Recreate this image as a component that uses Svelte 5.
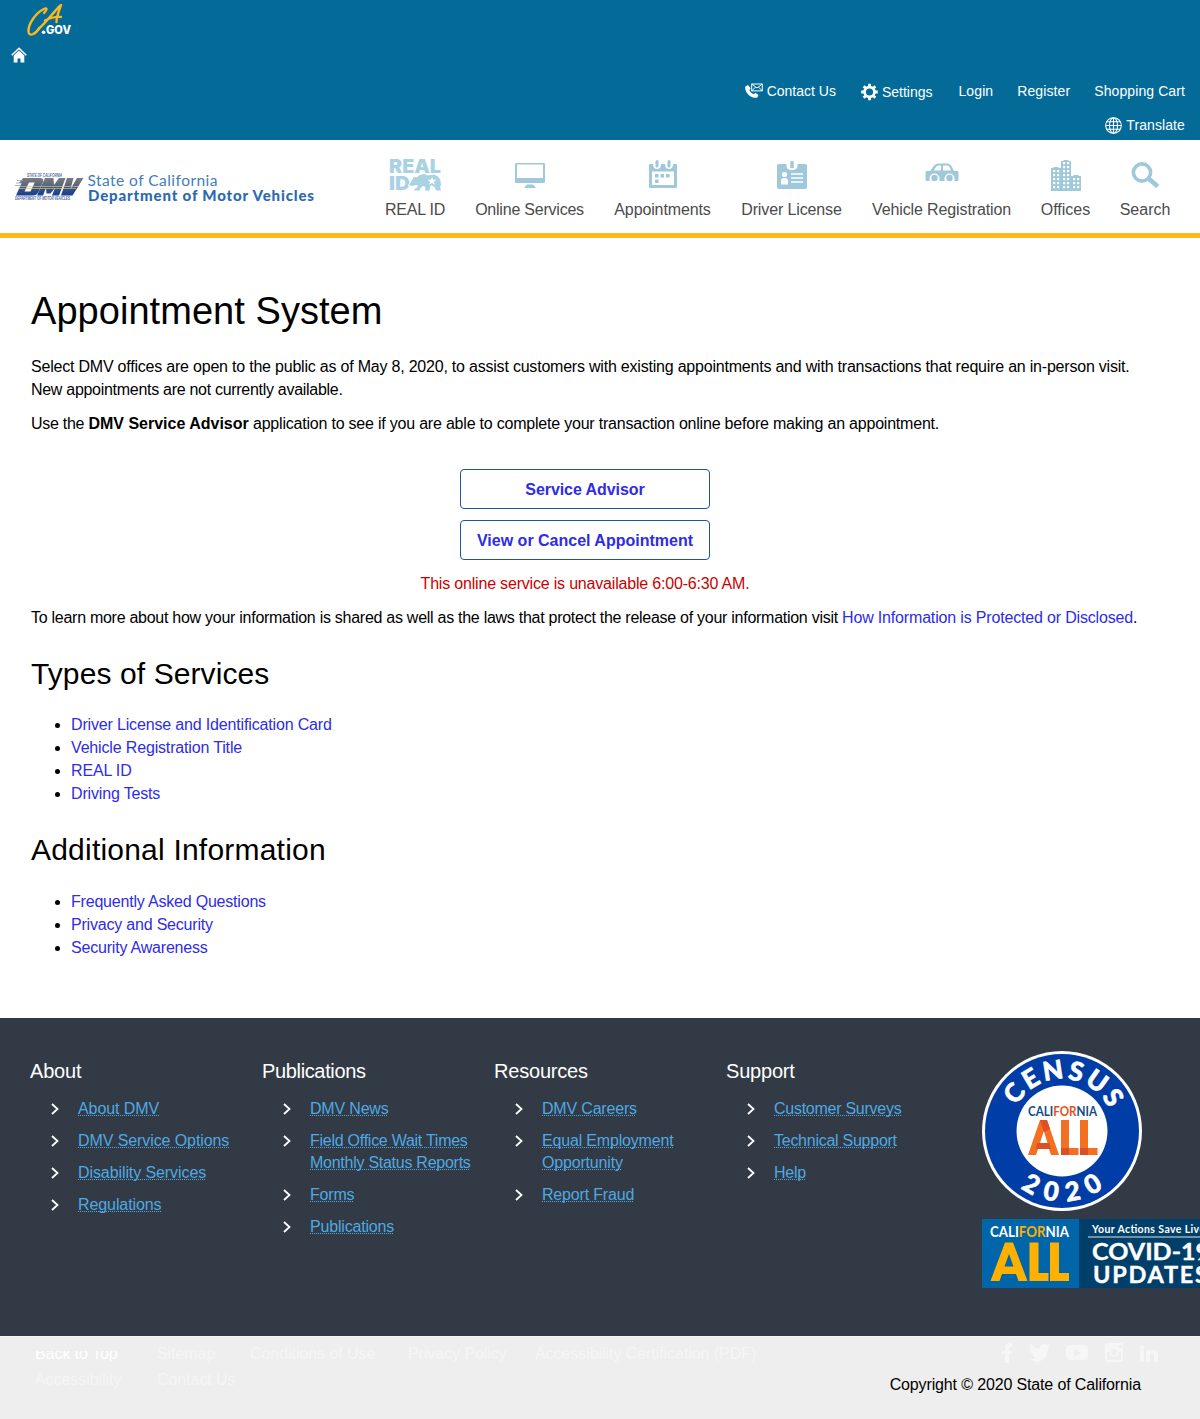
<script>
  const utility = [
    { label: 'Contact Us', icon: 'contact' },
    { label: 'Settings', icon: 'gear' },
    { label: 'Login' },
    { label: 'Register' },
    { label: 'Shopping Cart' }
  ];
  const nav = ['REAL ID', 'Online Services', 'Appointments', 'Driver License', 'Vehicle Registration', 'Offices', 'Search'];
  const services = ['Driver License and Identification Card', 'Vehicle Registration Title', 'REAL ID', 'Driving Tests'];
  const additional = ['Frequently Asked Questions', 'Privacy and Security', 'Security Awareness'];
  const columns = [
    { title: 'About', links: ['About DMV', 'DMV Service Options', 'Disability Services', 'Regulations'] },
    { title: 'Publications', links: ['DMV News', 'Field Office Wait Times Monthly Status Reports', 'Forms', 'Publications'] },
    { title: 'Resources', links: ['DMV Careers', 'Equal Employment Opportunity', 'Report Fraud'] },
    { title: 'Support', links: ['Customer Surveys', 'Technical Support', 'Help'] }
  ];
  const windows = [
    [2, 12], [6, 12], [2, 16], [6, 16], [2, 20], [6, 20], [2, 24], [6, 24],
    [12, 4], [16, 4], [12, 8], [16, 8], [12, 12], [16, 12], [12, 16], [16, 16], [12, 20], [16, 20], [12, 24], [16, 24],
    [22, 20], [26, 20], [22, 24], [26, 24], [2, 28], [6, 28], [12, 28], [16, 28], [22, 28], [26, 28]
  ];
</script>

<header class="top">
  <svg class="cagov" width="46" height="34" viewBox="0 0 46 34">
    <g fill="none" stroke="#fdb81e" stroke-linecap="round" stroke-linejoin="round">
      <path stroke-width="2.400" d="M17 9c4-4 3-6-1-3.500C9 9 1 20 1.500 27.500c.5 6 7 2.500 11-3.500" />
      <path stroke-width="2.400" d="M12 24.500C19 19 28 6 34 1c-2 6-4.500 11-4.500 17M18 16.500c6-3 11-4 16-3.500" />
    </g>
    <circle cx="16.600" cy="28.300" r="1.800" fill="#fff" />
    <text x="19" y="30" textLength="25" lengthAdjust="spacingAndGlyphs" class="gov">GOV</text>
  </svg>
  <svg class="home" width="16" height="16" viewBox="0 0 16 16">
    <path d="M.7 8.200 8 1.300l7.300 6.900" fill="none" stroke="#fff" stroke-width="1.500" />
    <path d="M2.700 8.500 8 3.600l5.300 4.900V15.500H9.500v-4h-3v4H2.700z" fill="#fff" />
  </svg>
  <ul class="utility">
    {#each utility as item, i}
      <li class="u{i}">
        {#if item.icon === 'contact'}
          <svg width="18" height="16" viewBox="0 0 18 16">
            <path d="M.3 3.500 3 2l2.700 3.300L4.400 7.200c1 2 2.500 3.300 4.400 4l1.500-1.500 3.200 2.200-1.200 2.500C6 16.500-.8 9.500.3 3.500z" fill="#fff" />
            <path d="M6.700 1h10.600v6.900H6.700zM6.700 1l5.300 4 5.300-4M6.700 7.900l3.700-3.700M17.300 7.900l-3.700-3.700" fill="none" stroke="#fff" stroke-width="1" />
          </svg>
        {:else if item.icon === 'gear'}
          <svg width="17" height="18" viewBox="0 0 18 18">
            <circle cx="9" cy="9" r="5.200" fill="none" stroke="#fff" stroke-width="2.800" />
            <g stroke="#fff" stroke-width="3">
              <path d="M9 .2v3M9 14.800v3M.2 9h3M14.800 9h3M2.800 2.800l2 2M13.200 13.200l2 2M2.800 15.200l2-2M13.200 4.800l2-2" />
            </g>
          </svg>
        {/if}
        <span>{item.label}</span>
      </li>
    {/each}
  </ul>
  <div class="translate">
    <svg width="17" height="17" viewBox="0 0 17 17" fill="none" stroke="#fff" stroke-width="1.100">
      <circle cx="8.500" cy="8.500" r="7.800" />
      <ellipse cx="8.500" cy="8.500" rx="4" ry="7.800" />
      <path d="M8.500.7v15.600M.7 8.500h15.600M2 4.700h13M2 12.300h13" />
    </svg>
    <span>Translate</span>
  </div>
</header>

<div class="masthead">
  <svg class="brand" width="302" height="34" viewBox="0 0 302 34">
    <defs>
      <linearGradient id="dmv" gradientUnits="userSpaceOnUse" x1="0" y1="6" x2="0" y2="24">
        <stop offset="0" stop-color="#7b7b7d" />
        <stop offset=".4" stop-color="#5b6780" />
        <stop offset=".6" stop-color="#2f5092" />
        <stop offset="1" stop-color="#183d91" />
      </linearGradient>
    </defs>
    <text class="tiny" x="12" y="5" textLength="35" lengthAdjust="spacingAndGlyphs">STATE OF CALIFORNIA</text>
    <g fill="url(#dmv)" fill-rule="evenodd">
      <path d="M8 6h17q4 0 3 4l-4 9q-2 4.500-6 4.500H1L6.500 11H4zM14 10.500 9.500 19.500h6l4.200-9z" />
      <path d="M30 6h8.500l.5 7 5-7h6.500l-6.500 17.500h-7l3-7.500-4.500 5.500h-4L31 16l-3 7.500h-6z" />
      <path d="M52 6h6.500l-3 11L62 6h6.500L57.500 23.500H46z" />
    </g>
    <path d="M5 14.500h58M4 16.500h57" stroke="#e0c558" stroke-width=".7" />
    <path d="M2 8.500h6M1 11h6M0 13.500h5" stroke="#8f9fbc" stroke-width=".8" />
    <text class="tiny" x="0" y="28" textLength="55" lengthAdjust="spacingAndGlyphs">DEPARTMENT OF MOTOR VEHICLES</text>
    <text class="state" x="72.500" y="14" textLength="130">State of California</text>
    <text class="dept" x="73" y="28.500" textLength="226">Department of Motor Vehicles</text>
  </svg>
  <nav>
    {#each nav as label, i}
      <a href="#{i}" class="n{i}">
        <span class="icon">
          {#if i === 0}
            <svg width="54" height="34" viewBox="0 0 54 34" fill="#a9d2e3">
              <text class="real" x="1" y="15" textLength="52" lengthAdjust="spacingAndGlyphs">REAL</text>
              <text class="real" x="1" y="31.500" textLength="21" lengthAdjust="spacingAndGlyphs">ID</text>
              <path class="bear" d="M21 27l2.500-4 2-3.500 1.500-.5 1.500.5L32 17l4-1 4 1.500 6-1 4 2 2.500 4 .5 5-1 1.500 1 3.500h-5l-1-3-3.500-2.500-1.500 2-.5 3.500h-4.500l.5-3.500-2.500-1-2.500 2-1 2.500h-5.500l1-2 2.500-1v-2.500l-3 .2-2 .8z" />
              <path d="m44 19 1.200 2.800h3.200l-2.500 2 1 3-2.900-1.800-2.900 1.800 1-3-2.500-2h3.200z" fill="#fff" />
            </svg>
          {:else if i === 1}
            <svg width="30" height="34" viewBox="0 0 30 34" fill="#9fc8db">
              <path fill-rule="evenodd" d="M1 5h28q1 0 1 1v18q0 1-1 1H1q-1 0-1-1V6q0-1 1-1zM2 6.500v13.500h26v-13.500z" />
              <path d="M12 26.500h6l3 3.500H9z" />
            </svg>
          {:else if i === 2}
            <svg width="28" height="34" viewBox="0 0 28 34" fill="#9fc8db">
              <path fill-rule="evenodd" d="M1 6h3q0 5 4 5t4-5h4q0 5 4 5t4-5h3q1 0 1 1v22q0 1-1 1H1q-1 0-1-1V7q0-1 1-1zM3 13.500V27h22V13.500z" />
              <rect x="6.500" y="2" width="3" height="7.500" rx="1.500" /><rect x="18.500" y="2" width="3" height="7.500" rx="1.500" />
              <path d="M11.500 16H15v3.500h-3.500zM17 16h3.500v3.500H17zM6 21.500h3.500V25H6zM6 16h3.500v3.500H6z" />
            </svg>
          {:else if i === 3}
            <svg width="30" height="34" viewBox="0 0 30 34">
              <rect y="6" width="30" height="25" rx="2" fill="#9fc8db" />
              <path d="M9.500 5v3q0 4 5.500 4t5.500-4V5z" fill="#fff" />
              <path d="M13.300 3h3.400v7h-3.400z" fill="#9fc8db" />
              <circle cx="7.500" cy="16.500" r="2.600" fill="#fff" />
              <path d="M4 26.500v-4q0-2.500 3.500-2.500t3.500 2.500v4z M14 15.200h12v1.600H14zM14 19.200h12v1.600H14zM14 23.200h12v1.600H14z" fill="#fff" />
            </svg>
          {:else if i === 4}
            <svg width="34" height="34" viewBox="0 0 34 34" fill="#9fc8db">
              <path d="M1.500 13H5l3-4q2-3.500 6-3.500h8q3 0 5 3.500l2 4h3q1.500 0 1.500 1.500v7q0 1.500-1.500 1.500h-30Q.5 23 .5 21.500v-7Q.5 13 1.500 13z" />
              <path d="M9 12.500h7V7.500h-2q-3 0-5 5zM18 7.500v5h8q-1.500-5-4-5z" fill="#fff" />
              <path d="M4.500 23.500v-3a5 5 0 0 1 10 0v3zM19.500 23.500v-3a5 5 0 0 1 10 0v3z" fill="#fff" />
              <circle cx="9.500" cy="20" r="3.200" /><circle cx="24.500" cy="20" r="3.200" />
            </svg>
          {:else if i === 5}
            <svg width="30" height="34" viewBox="0 0 30 34">
              <path fill="#9fc8db" d="M0 10h2l1-1h4l1 1h2V3h2l1-1h4l1 1h2v15h2l1-1h4l1 1h2v15H0z" />
              {#each windows as [x, y]}
                <rect {x} {y} width="2.200" height="2.200" fill="#fff" />
              {/each}
            </svg>
          {:else}
            <svg width="30" height="34" viewBox="0 0 30 34" fill="none" stroke="#9fc8db">
              <circle cx="12" cy="14.500" r="8.600" stroke-width="3.600" />
              <path d="m18.500 20.500 9.300 8" stroke-width="4.600" />
            </svg>
          {/if}
        </span>
        <span class="label">{label}</span>
      </a>
    {/each}
  </nav>
</div>

<main>
  <h1>Appointment System</h1>
  <p class="intro"><span class="a">Select DMV offices are open to the public as of May 8, 2020, to assist customers with existing appointments and with transactions that require an in-person visit.</span><br /><span class="b">New appointments are not currently available.</span></p>
  <p class="use"><span class="b">Use the</span> <strong>DMV Service Advisor</strong> application to see if you are able to complete your transaction online before making an appointment.</p>
  <div class="actions">
    <button class="advisor">Service Advisor</button>
    <button class="cancel">View or Cancel Appointment</button>
    <p class="warn">This online service is unavailable 6:00-6:30 AM.</p>
  </div>
  <p class="learn">To learn more about how your information is shared as well as the laws that protect the release of your information visit <a href="#privacy">How Information is Protected or Disclosed</a>.</p>
  <h2 class="types">Types of Services</h2>
  <ul class="list">
    {#each services as s}<li><a href="#{s}">{s}</a></li>{/each}
  </ul>
  <h2 class="more">Additional Information</h2>
  <ul class="list extra">
    {#each additional as s}<li><a href="#{s}">{s}</a></li>{/each}
  </ul>
</main>

<footer class="links">
  {#each columns as col}
    <section>
      <h3>{col.title}</h3>
      <ul>
        {#each col.links as link}
          <li>
            <svg width="8" height="12" viewBox="0 0 8 12"><path d="m1 1 5.500 5L1 11" fill="none" stroke="#fff" stroke-width="1.800" /></svg>
            <a href="#{link}">{link}</a>
          </li>
        {/each}
      </ul>
    </section>
  {/each}
  <div class="badges">
    <svg width="160" height="160" viewBox="0 0 160 160">
      <defs>
        <path id="arcTop" d="M28 80a52 52 0 0 1 104 0" />
        <path id="arcBottom" d="M9.500 80a70.500 70.500 0 0 0 141 0" />
      </defs>
      <circle cx="80" cy="80" r="80" fill="#fff" />
      <circle cx="80" cy="80" r="77" fill="#003da6" />
      <circle cx="80" cy="80" r="45.500" fill="#fff" />
      <text class="census"><textPath href="#arcTop" startOffset="51%" text-anchor="middle" textLength="114">CENSUS</textPath></text>
      <text class="census"><textPath href="#arcBottom" startOffset="50%" text-anchor="middle" textLength="89">2020</textPath></text>
      <text class="cal" x="46" y="65" textLength="69" lengthAdjust="spacingAndGlyphs"><tspan fill="#124b83">CALI</tspan><tspan fill="#df5223">FOR</tspan><tspan fill="#124b83">NIA</tspan></text>
      <g fill="#f36f21">
        <path fill-rule="evenodd" d="M46 104 58 69h7l12 35h-8l-2-6H56l-2 6zM58 92h7.500l-3.700-12z" />
        <path d="M79 69h8v28h9.500v7H79zM98 69h8v28h9.500v7H98z" />
      </g>
      <path d="M58 69h7l3 9-6 3zM55 92h12l2 6H54zM79 97h8v7h-8zM98 97h8v7h-8z" fill="#dd5025" />
    </svg>
    <svg class="covid" width="218" height="69" viewBox="0 0 218 69">
      <path fill="#0065a9" d="M0 0h97v69H0z" />
      <path fill="#003f69" d="M97 0h121v69H97z" />
      <text class="cal2" x="8" y="17.500" textLength="79" lengthAdjust="spacingAndGlyphs">CALI<tspan fill="#fdb000">FOR</tspan>NIA</text>
      <g fill="#ffb000">
        <path fill-rule="evenodd" d="M8.500 62 23 23.500h8L45.500 62h-9L34 55H20l-2.500 7zM22.500 47.500h9L27 35z" />
        <path d="M47.500 23.500h9V54h10v8h-19zM68 23.500h9V54h10v8H68z" />
      </g>
      <text class="actions-text" x="110" y="14" textLength="118">Your Actions Save Lives</text>
      <path d="M106 18h112" stroke="#dbe5ec" />
      <text class="big" x="110" y="40.500" textLength="118" lengthAdjust="spacingAndGlyphs">COVID-19</text>
      <text class="big" x="111" y="63.500" textLength="115" lengthAdjust="spacing">UPDATES</text>
    </svg>
  </div>
</footer>

<footer class="bottom">
  <div class="legal">
    <span class="back">Back to Top</span><span>Sitemap</span><span>Conditions of Use</span><span>Privacy Policy</span><span>Accessibility Certification (PDF)</span>
    <span>Accessibility</span><span>Contact Us</span>
  </div>
  <div class="right">
    <div class="social">
      <svg width="12" height="20" viewBox="0 0 12 20"><path d="M3 20v-9H0V8h3V5q0-5 5-5h2v4H8q-1 0-1 2v2h3l-.5 3H7v9z" /></svg>
      <svg width="20" height="18" viewBox="0 0 20 18"><path d="M0 15q3 .5 6-1.500-3-.5-4-3h2Q0 9 .5 5L2 6Q-1 3 1 0q4 5 9 5-1-5 4-5 2 0 3 1l3-1-2 3 2-.5-2 2.500q-.5 11-10 13-5 0-8-3z" /></svg>
      <svg width="22" height="16" viewBox="0 0 22 16"><path fill-rule="evenodd" d="M4 0h14q4 0 4 4v7q0 4-4 4H4q-4 0-4-4V4q0-4 4-4zM8 4v8l7-4z" /></svg>
      <svg width="20" height="20" viewBox="0 0 20 20"><path fill-rule="evenodd" d="M3 0h14q2 0 2 2v15q0 2-2 2H3q-2 0-2-2V2q0-2 2-2zM15 2v3h3V2zM3 9v8h14V9h-2a5 5 0 1 1-10 0zM13 9a3 3 0 1 0-6 0 3 3 0 0 0 6 0z" /></svg>
      <svg width="18" height="18" viewBox="0 0 18 18"><path d="M0 6h4v12H0zM0 1h4v4H0zM6 6h4v2q5-5 8 1v9h-4v-8q-2-3-4 0v8H6z" /></svg>
    </div>
    <p>Copyright © 2020 State of California</p>
  </div>
</footer>

<style>
  :global(body) { margin: 0; background: #fff; overflow-x: hidden; }
  :global(#app) { font: 16px/23px "Liberation Sans", Arial, sans-serif; color: #000; }
  ul { list-style: none; margin: 0; padding: 0; }
  p, h1, h2, h3 { margin: 0; font-weight: 400; }
  a { text-decoration: none; color: #2e2ce6; }
  svg { display: block; flex: none; }

  .top { height: 140px; background: #046b99; color: #fff; box-sizing: border-box; padding-top: 4px; font-size: 14px; line-height: 20px; }
  .cagov { margin-left: 27px; }
  .gov { font: 800 11.500px Inter, Lato, sans-serif; fill: #fff; }
  .home { margin: 9px 0 0 11px; }
  .utility { display: flex; justify-content: flex-end; gap: 25px; padding: 18px 15px 0 0; height: 22px; }
  .utility li { display: flex; align-items: center; gap: 4px; height: 20px; }
  .utility .u1 { position: relative; top: 1px; margin-right: 1px; }
  .utility .u2, .utility .u3, .utility .u4 { letter-spacing: .1px; }
  .utility .u3, .utility .u4 { margin-left: -1px; }
  .translate { display: flex; justify-content: flex-end; align-items: center; gap: 4px; padding: 12px 15px 0 0; letter-spacing: .1px; }

  .masthead { height: 93px; border-bottom: 5px solid #fdb81e; display: flex; justify-content: space-between; }
  .brand { margin: 32px 0 0 15px; }
  .tiny { font: italic bold 4.500px "Liberation Sans", sans-serif; fill: #4a679d; }
  .state { font: 15.500px Lato, sans-serif; fill: #3f7dbd; }
  .dept { font: 900 15px Lato, sans-serif; fill: #2c69b1; }
  nav { display: grid; grid-template-columns: 60px 109px 97px 101px 139px 49px 50px; gap: 30px; padding-right: 30px; }
  nav a { display: flex; flex-direction: column; align-items: center; color: #4b4b4b; white-space: nowrap; letter-spacing: -.12px; }
  nav .n0, nav .n1 { letter-spacing: -.22px; }
  nav .n5, nav .n6 { letter-spacing: 0; }
  .icon { padding-top: 18px; height: 40px; letter-spacing: 0; }
  .real { font: 900 19px Inter, Lato, sans-serif; }
  .bear { stroke: #fff; stroke-width: 1.500px; paint-order: stroke; }

  main { padding: 0 31px; height: 780px; display: flow-root; }
  h1 { margin-top: 51px; font-size: 38px; line-height: 44px; letter-spacing: .05px; }
  .intro { margin-top: 22px; white-space: nowrap; }
  .intro .a { letter-spacing: -.211px; }
  .b { letter-spacing: -.29px; }
  .use { margin-top: 11px; white-space: nowrap; letter-spacing: -.21px; }
  .use strong { letter-spacing: 0; }
  .actions { display: flex; flex-direction: column; align-items: center; gap: 11px; margin: 34px 30px 0 0; }
  button { width: 250px; height: 40px; border: 1px solid #205493; border-radius: 4px; background: #fff; color: #2e2ce6; font: bold 16px "Liberation Sans", sans-serif; padding: 2px 0 0; white-space: nowrap; }
  .advisor { letter-spacing: -.06px; }
  .warn { color: #cc0000; margin-top: 1px; letter-spacing: -.19px; }
  .learn { margin-top: 11px; white-space: nowrap; letter-spacing: -.27px; }
  .learn a { letter-spacing: -.17px; }
  h2 { font-size: 30px; line-height: 36px; }
  .types { margin-top: 27px; letter-spacing: .1px; }
  .more { margin-top: 27px; letter-spacing: .21px; }
  .list { margin-top: 21px; padding-left: 40px; list-style: disc; letter-spacing: -.16px; }
  .extra { margin-top: 22px; letter-spacing: -.2px; }

  .links { height: 318px; box-sizing: border-box; background: #323a45; padding: 33px 0 0 30px; display: grid; grid-template-columns: repeat(4, 232px) 1fr; overflow: hidden; }
  h3 { color: #fff; font-size: 20px; line-height: 24px; margin-top: 8px; letter-spacing: -.2px; }
  section:nth-child(2) h3 { letter-spacing: -.35px; }
  .links ul { padding: 15px 0 0 21px; display: grid; gap: 10px; }
  .links li { display: flex; gap: 19px; width: 195px; line-height: 22px; letter-spacing: -.18px; }
  section:nth-child(1) li { letter-spacing: -.09px; }
  section:nth-child(2) li:nth-child(2) { letter-spacing: -.26px; }
  section:nth-child(4) li { letter-spacing: -.26px; }
  .links li svg { margin-top: 5px; }
  .links a { color: #4fa9e2; text-decoration: underline dotted 1px; text-underline-offset: 1px; text-decoration-skip-ink: none; }
  .badges { padding-left: 24px; }
  .covid { margin-top: 8px; }
  .census { font: 900 26px Lato, sans-serif; fill: #fff; stroke: #fff; stroke-width: .6px; }
  .cal { font: bold 14px Lato, sans-serif; }
  .cal2 { font: bold 15px Lato, sans-serif; fill: #fff; }
  .actions-text { font: bold 10.500px Lato, sans-serif; fill: #fff; }
  .big { font: bold 23.500px Lato, sans-serif; fill: #fff; stroke: #fff; stroke-width: .4px; }

  .bottom { height: 83px; background: #eee; display: flex; justify-content: space-between; box-sizing: border-box; padding: 5px 59px 0 35px; border-top: 1px solid #f7f7f7; }
  .legal { color: #f5f5f5; display: grid; grid-template-columns: 122px 93px 158px 127px 230px; grid-auto-rows: 26px; white-space: nowrap; letter-spacing: -.06px; }
  .back { color: #fff; clip-path: inset(9px 0 0 0); }
  .social { display: flex; gap: 16px; justify-content: flex-end; height: 20px; align-items: center; fill: #f6f6f6; position: relative; left: 17px; top: 1px; }
  .right p { margin-top: 11px; letter-spacing: -.14px; }
</style>
